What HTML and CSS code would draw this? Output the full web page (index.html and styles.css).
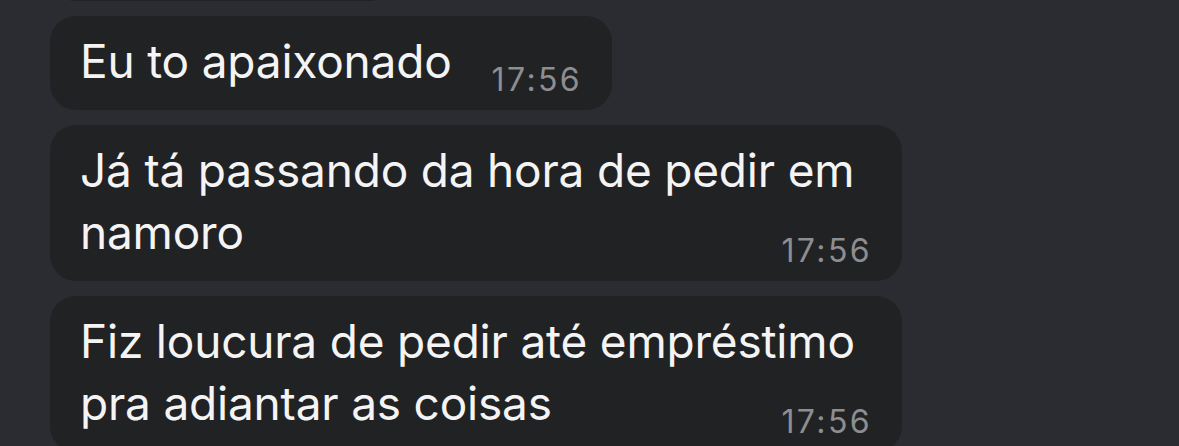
FILE: index.html
```html
<!doctype html>
<html>
  <head>
    <meta charset="utf-8" />
    <title>Chat</title>
    <link rel="stylesheet" href="styles.css">
  </head>

  <body>
    <div class="chat">
      <div class="bubble bubble-cut"></div>

      <div class="bubble">
        <span class="text">Eu to apaixonado</span>
        <span class="time">17:56</span>
      </div>

      <div class="bubble">
        <span class="text">Já tá passando da hora de pedir em namoro</span>
        <span class="time">17:56</span>
      </div>

      <div class="bubble">
        <span class="text">Fiz loucura de pedir até empréstimo pra adiantar as coisas</span>
        <span class="time">17:56</span>
      </div>
    </div>
  </body>
</html>
```

FILE: styles.css
```css
html,
body {
  margin: 0;
  padding: 0;
  height: 100%;
  overflow: hidden;
  background-color: #2a2c31;
}

body {
  font-family: Inter, "Noto Sans", sans-serif;
}

.chat {
  display: flex;
  flex-direction: column;
  align-items: flex-start;
  gap: 15px;
  padding-left: 50px;
}

.bubble {
  background-color: #212224;
  border-radius: 26px;
  padding: 14px 30px 14px 30px;
  max-width: 792px;
  color: #f4f4f4;
  font-size: 46px;
  line-height: 62px;
  letter-spacing: -0.2px;
}

.bubble-cut {
  width: 315px;
  height: 60px;
  margin-top: -89px;
  padding: 15px;
}

.time {
  float: right;
  margin: 34px 0 0 40px;
  font-size: 32px;
  line-height: 32px;
  letter-spacing: 2.4px;
  color: #8e8e90;
}
```
